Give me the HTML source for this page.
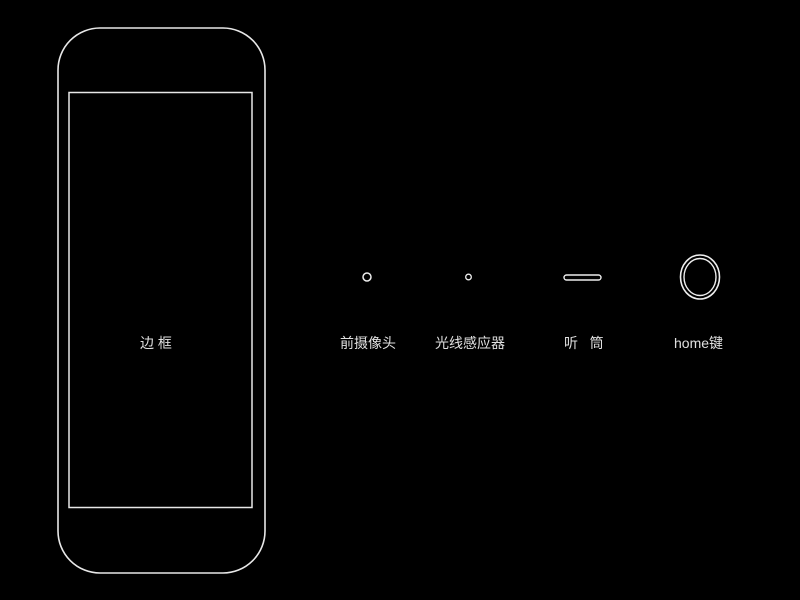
<!DOCTYPE html>
<html><head><meta charset="utf-8"><style>
html,body{margin:0;padding:0;background:#000;width:800px;height:600px;overflow:hidden}
.t{position:absolute;top:333px;color:#e0e0e0;font:14px "Liberation Sans","Noto Sans CJK SC",sans-serif;white-space:nowrap;line-height:20px}
</style></head><body>
<svg width="800" height="600" style="position:absolute;left:0;top:0">
<rect x="58" y="28" width="207" height="545" rx="42" ry="42" fill="none" stroke="#e8e8e8" stroke-width="1.6"/>
<rect x="69" y="92.5" width="183" height="415" fill="none" stroke="#e8e8e8" stroke-width="1.5"/>
<circle cx="367" cy="277" r="4" fill="none" stroke="#eee" stroke-width="1.5"/>
<circle cx="468.5" cy="277" r="2.8" fill="none" stroke="#eee" stroke-width="1.3"/>
<rect x="564" y="275" width="37" height="5" rx="2.5" fill="none" stroke="#eee" stroke-width="1.4"/>
<ellipse cx="700" cy="277" rx="19.5" ry="22" fill="none" stroke="#eee" stroke-width="1.6"/>
<ellipse cx="700" cy="277" rx="16" ry="18.5" fill="none" stroke="#eee" stroke-width="1.4"/>
</svg>
<div class="t" style="left:340px">前摄像头</div>
<div class="t" style="left:435px">光线感应器</div>
<div class="t" style="left:140px">边 框</div>
<div class="t" style="left:564px">听&nbsp;&nbsp;&nbsp;筒</div>
<div class="t" style="left:674px">home键</div>
</body></html>
